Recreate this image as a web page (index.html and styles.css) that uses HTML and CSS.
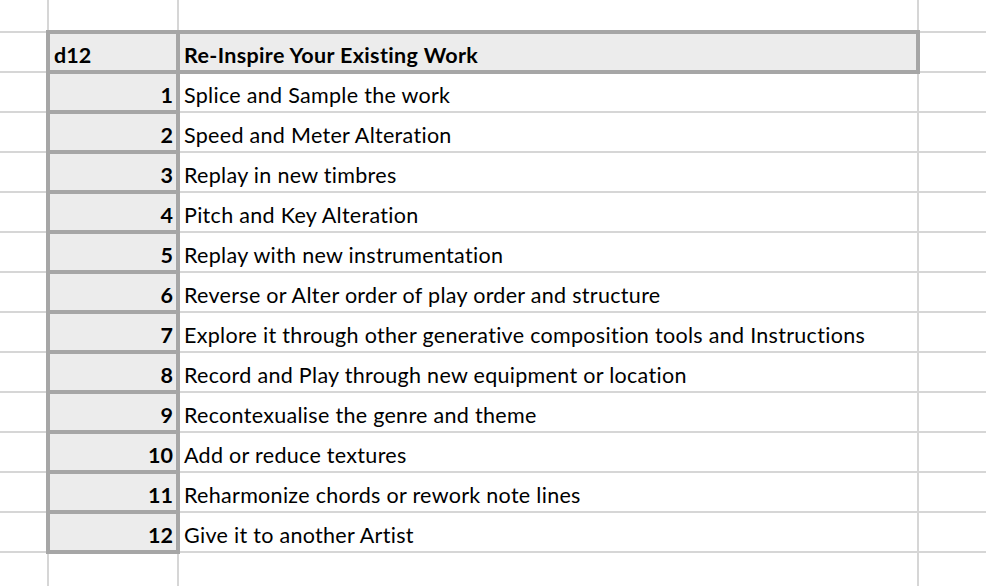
FILE: index.html
```html
<!DOCTYPE html>
<html>
<head>
<meta charset="utf-8">
<link rel="stylesheet" href="styles.css">
</head>
<body>
<div class="sheet">
  <div class="c"></div><div class="c"></div><div class="c"></div><div class="c"></div>

  <div class="c"></div><div class="c hd">d12</div><div class="c hd hd-title">Re-Inspire Your Existing Work</div><div class="c"></div>

  <div class="c"></div><div class="c num">1</div><div class="c txt">Splice and Sample the work</div><div class="c"></div>
  <div class="c"></div><div class="c num">2</div><div class="c txt">Speed and Meter Alteration</div><div class="c"></div>
  <div class="c"></div><div class="c num">3</div><div class="c txt">Replay in new timbres</div><div class="c"></div>
  <div class="c"></div><div class="c num">4</div><div class="c txt">Pitch and Key Alteration</div><div class="c"></div>
  <div class="c"></div><div class="c num">5</div><div class="c txt">Replay with new instrumentation</div><div class="c"></div>
  <div class="c"></div><div class="c num">6</div><div class="c txt">Reverse or Alter order of play order and structure</div><div class="c"></div>
  <div class="c"></div><div class="c num">7</div><div class="c txt">Explore it through other generative composition tools and Instructions</div><div class="c"></div>
  <div class="c"></div><div class="c num">8</div><div class="c txt">Record and Play through new equipment or location</div><div class="c"></div>
  <div class="c"></div><div class="c num">9</div><div class="c txt">Recontexualise the genre and theme</div><div class="c"></div>
  <div class="c"></div><div class="c num">10</div><div class="c txt">Add or reduce textures</div><div class="c"></div>
  <div class="c"></div><div class="c num">11</div><div class="c txt">Reharmonize chords or rework note lines</div><div class="c"></div>
  <div class="c"></div><div class="c num">12</div><div class="c txt">Give it to another Artist</div><div class="c"></div>

  <div class="c"></div><div class="c"></div><div class="c"></div><div class="c"></div>
</div>
</body>
</html>
```
FILE: styles.css
```css
html, body {
  margin: 0;
  padding: 0;
  background: #ffffff;
  overflow: hidden;
}

.sheet {
  display: grid;
  grid-template-columns: 47px 128px 738px 1fr;
  grid-template-rows: 31px repeat(14, 38px);
  gap: 2px;
  background: #d6d6d6;
  width: 986px;
  height: 586px;
  overflow: hidden;
  font-family: Lato, "Open Sans", sans-serif;
  font-size: 21.5px;
  letter-spacing: 0.3px;
  color: #000;
}

.c {
  background: #ffffff;
  display: flex;
  align-items: flex-end;
  white-space: nowrap;
  padding-bottom: 3px;
  box-sizing: border-box;
}

.hd,
.num {
  background: #ececec;
  box-shadow: 0 0 0 3px #a6a6a6, inset 0 0 0 1px #a6a6a6;
  z-index: 1;
}

.hd {
  font-weight: 700;
  letter-spacing: 0;
  padding-left: 5px;
}

.hd-title {
  letter-spacing: 0.35px;
}

.num {
  font-weight: 700;
  letter-spacing: 0;
  justify-content: flex-end;
  padding-right: 4px;
}

.txt {
  padding-left: 5px;
}
```
